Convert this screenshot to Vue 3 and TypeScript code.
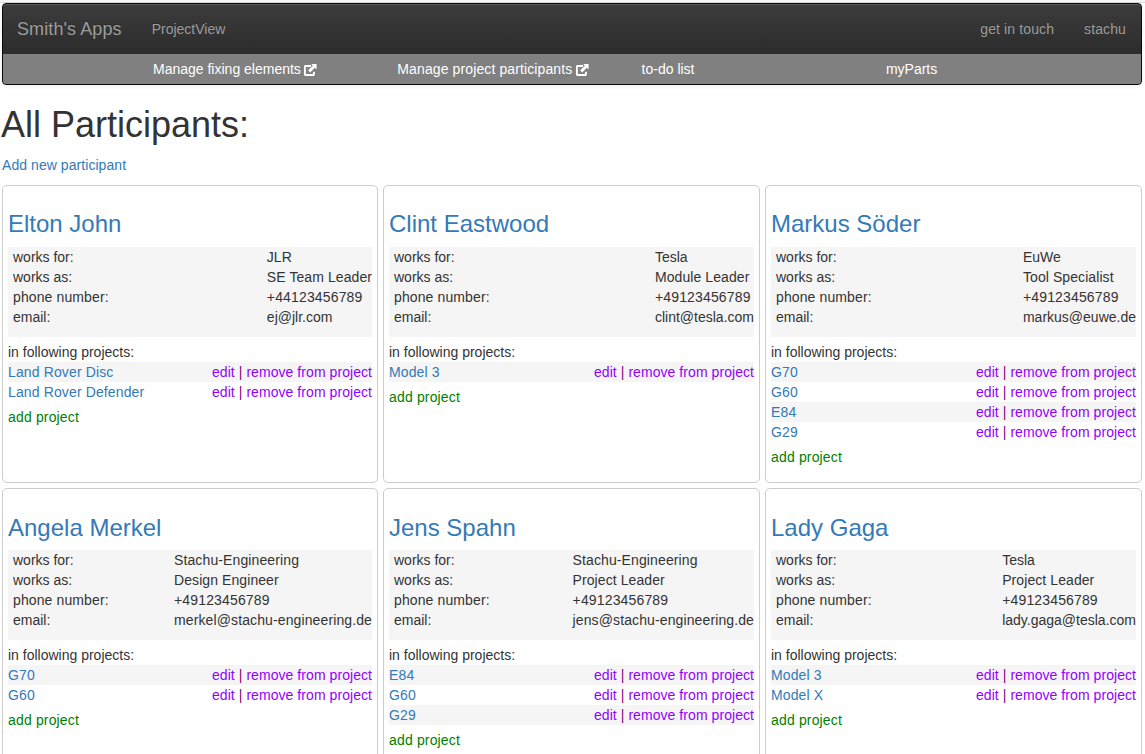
<script setup lang="ts">
interface Person {
  name: string
  company: string
  role: string
  phone: string
  email: string
  projects: string[]
}

interface Section {
  label: string
  external: boolean
}

const sections: Section[] = [
  { label: 'Manage fixing elements', external: true },
  { label: 'Manage project participants', external: true },
  { label: 'to-do list', external: false },
  { label: 'myParts', external: false },
]

const people: Person[] = [
  { name: 'Elton John', company: 'JLR', role: 'SE Team Leader', phone: '+44123456789', email: 'ej@jlr.com', projects: ['Land Rover Disc', 'Land Rover Defender'] },
  { name: 'Clint Eastwood', company: 'Tesla', role: 'Module Leader', phone: '+49123456789', email: 'clint@tesla.com', projects: ['Model 3'] },
  { name: 'Markus Söder', company: 'EuWe', role: 'Tool Specialist', phone: '+49123456789', email: 'markus@euwe.de', projects: ['G70', 'G60', 'E84', 'G29'] },
  { name: 'Angela Merkel', company: 'Stachu-Engineering', role: 'Design Engineer', phone: '+49123456789', email: 'merkel@stachu-engineering.de', projects: ['G70', 'G60'] },
  { name: 'Jens Spahn', company: 'Stachu-Engineering', role: 'Project Leader', phone: '+49123456789', email: 'jens@stachu-engineering.de', projects: ['E84', 'G60', 'G29'] },
  { name: 'Lady Gaga', company: 'Tesla', role: 'Project Leader', phone: '+49123456789', email: 'lady.gaga@tesla.com', projects: ['Model 3', 'Model X'] },
]
</script>

<template>
  <div class="page">
    <nav class="navbar">
      <div class="main-bar">
        <a class="brand">Smith's Apps</a>
        <a class="nav-link">ProjectView</a>
        <div class="spacer"></div>
        <a class="nav-link loose">get in touch</a>
        <a class="nav-link loose">stachu</a>
      </div>
      <div class="sub-bar">
        <a v-for="section in sections" :key="section.label" class="sub-link" :class="{ loose: section.label.length > 22 }">
          {{ section.label }}
          <svg v-if="section.external" class="ext-icon" viewBox="0 0 14 14" width="14" height="14">
            <path d="M8 3H2.4Q1.9 3 1.9 3.5V11.5Q1.9 12 2.4 12H10.4Q10.9 12 10.9 11.5V8.8" fill="none" stroke="#fff" stroke-width="1.9" />
            <path d="M8.2 1H13.6V6.4L11.8 4.8L7.2 9.4L5.1 7.3L9.8 2.7Z" fill="#fff" />
          </svg>
        </a>
      </div>
    </nav>

    <h1>All Participants:</h1>
    <a class="add-participant">Add new participant</a>

    <div class="cards">
      <section v-for="person in people" :key="person.name" class="card">
        <h3>{{ person.name }}</h3>
        <dl class="info">
          <dt>works for:</dt><dd :class="{ loose: person.company.length > 10 }">{{ person.company }}</dd>
          <dt>works as:</dt><dd class="role">{{ person.role }}</dd>
          <dt class="loose">phone number:</dt><dd class="phone">{{ person.phone }}</dd>
          <dt>email:</dt><dd :class="{ loose: person.email.length > 20 }">{{ person.email }}</dd>
        </dl>
        <div>in following projects:</div>
        <ul class="projects">
          <li v-for="project in person.projects" :key="project">
            <a class="project">{{ project }}</a>
            <span class="actions"><a>edit</a> | <a>remove from project</a></span>
          </li>
        </ul>
        <a class="add-project">add project</a>
      </section>
    </div>
  </div>
</template>

<style>
html,
body {
  margin: 0;
  background: #fff;
  overflow: hidden;
}
</style>

<style scoped>
.page {
  display: flow-root;
  box-sizing: border-box;
  width: 1145px;
  height: 754px;
  overflow: hidden;
  padding: 0 3px 0 2px;
  font: 14px/20px "Liberation Sans", Arial, sans-serif;
  color: #333;
  background: linear-gradient(#f6f5f6 0 2px, #dcdbdc 2px 3px, #fff 3px);
}

.navbar {
  margin-top: 3px;
  border: 1px solid #080808;
  border-radius: 4px;
  background: linear-gradient(#3c3c3c, #222 100%);
  box-shadow: inset 0 1px 0 rgba(255, 255, 255, 0.15), 0 1px 5px rgba(0, 0, 0, 0.075);
}

.main-bar {
  display: flex;
  height: 50px;
  align-items: center;
  color: #9d9d9d;
  text-shadow: 0 -1px 0 rgba(0, 0, 0, 0.25);
}

.brand {
  padding: 0 15px 0 14px;
  font-size: 18px;
  letter-spacing: 0.1px;
}

.nav-link {
  padding: 0 15px;
}

.loose {
  letter-spacing: 0.115px;
}

.spacer {
  flex: 1;
}

.sub-bar {
  display: grid;
  grid-template-columns: repeat(4, 244.3px);
  height: 30px;
  padding-left: 150px;
  align-items: center;
  background: #808080;
  border-radius: 0 0 3px 3px;
  color: #fff;
}

.ext-icon {
  vertical-align: -3px;
  margin-left: -1.5px;
}

h1 {
  margin: 20px 0 10px -1px;
  font-size: 36px;
  line-height: 40px;
}

.add-participant {
  display: block;
  margin-bottom: 10px;
  letter-spacing: 0.06px;
}

.add-participant,
.project,
h3 {
  color: #337ab7;
}

h1,
h3 {
  font-weight: 400;
}

.cards {
  display: grid;
  grid-template-columns: 376px 377px 377px;
  grid-auto-rows: 298px;
  gap: 5px;
}

.card {
  box-sizing: border-box;
  padding: 5px;
  border: 1px solid #ccc;
  border-radius: 5px;
}

h3 {
  margin: 20px 0 10px;
  font-size: 24px;
  line-height: 26px;
}

.card:nth-child(n + 4) h3 {
  margin: 21px 0 9px;
}

.info {
  display: grid;
  grid-template-columns: 1fr auto;
  margin: 0 0 5px;
  padding: 0 0 10px 5px;
  background: #f5f5f5;
}

.info dd {
  margin: 0;
}

.info .role {
  letter-spacing: 0.08px;
}

.info .phone {
  letter-spacing: 0.15px;
}

.projects {
  margin: 0 0 5px;
  padding: 0;
  list-style: none;
}

.projects li {
  display: flex;
  justify-content: space-between;
}

.projects li:nth-child(odd) {
  background: #f5f5f5;
}

.project {
  letter-spacing: 0.13px;
}

.actions {
  color: #800080;
  letter-spacing: 0.06px;
}

.actions a {
  color: #9400ff;
}

.add-project {
  color: #008000;
  letter-spacing: 0.16px;
}
</style>
